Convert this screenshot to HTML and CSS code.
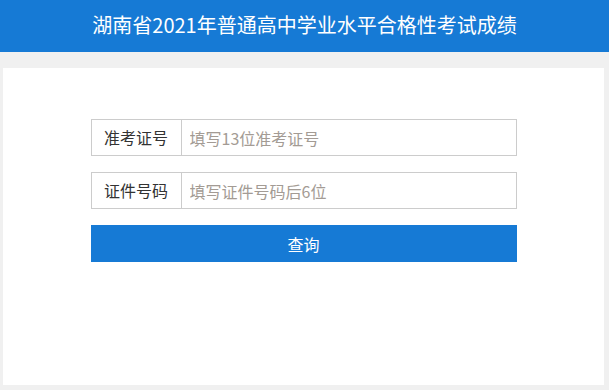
FILE: index.html
```html
<!DOCTYPE html>
<html lang="zh-CN">
<head>
  <meta charset="UTF-8" />
  <meta name="viewport" content="width=device-width, initial-scale=1" />
  <title>湖南省2021年普通高中学业水平合格性考试成绩</title>
  <link rel="stylesheet" href="styles.css">
</head>
<body>

<div class="header">湖南省2021年普通高中学业水平合格性考试成绩</div>

<div class="card">
  <form class="query-form">
    <div class="row">
      <label class="row-label">准考证号</label>
      <input class="row-input" type="text" name="examNo" placeholder="填写13位准考证号" />
    </div>
    <div class="row">
      <label class="row-label">证件号码</label>
      <input class="row-input" type="text" name="idNo" placeholder="填写证件号码后6位" />
    </div>
    <button class="btn" type="submit">查询</button>
  </form>
</div>

</body>
</html>
```

FILE: styles.css
```css
body, html {
  margin: 0;
  padding: 0;
  height: 100%;
  font-family: "Microsoft YaHei", "Noto Sans CJK SC", sans-serif;
  background: #f0f0f0;
  color: #333;
  overflow: hidden;
}

.header {
  height: 52px;
  line-height: 50px;
  background: #167ad5;
  color: #fff;
  font-size: 20px;
  text-align: center;
}

.card {
  margin: 16px 5px 0 3px;
  height: 317px;
  background: #fff;
  padding-top: 51px;
  box-sizing: border-box;
}

.query-form {
  width: 426px;
  margin: 0 auto;
  display: flex;
  flex-direction: column;
  gap: 16px;
}

.row {
  display: flex;
  height: 37px;
  border: 1px solid #ccc;
  box-sizing: border-box;
}

.row-label {
  width: 89px;
  border-right: 1px solid #ccc;
  text-align: center;
  line-height: 35px;
  font-size: 16px;
  color: #333;
  flex-shrink: 0;
}

.row-input {
  flex: 1;
  border: none;
  outline: none;
  padding: 0 8px;
  font-size: 16px;
  font-family: inherit;
  color: #333;
  min-width: 0;
}

.row-input::placeholder {
  color: #a39b94;
}

.btn {
  height: 37px;
  border: none;
  background: #167ad5;
  color: #fff;
  font-size: 16px;
  font-family: inherit;
  cursor: pointer;
  padding: 0;
}
```
